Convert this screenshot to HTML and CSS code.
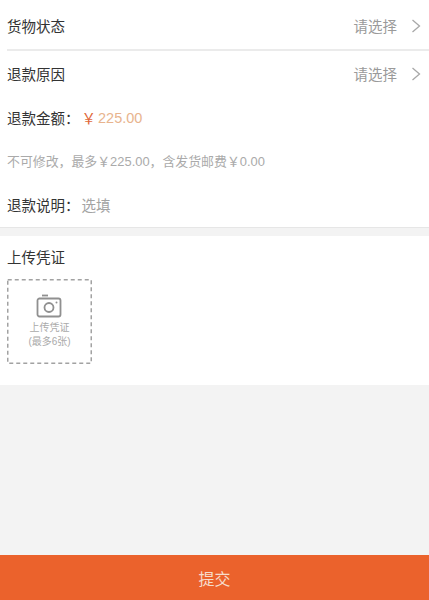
FILE: index.html
```html
<!DOCTYPE html>
<html lang="zh-CN">
<head>
    <meta charset="UTF-8">
    <meta name="viewport" content="width=device-width, initial-scale=1.0">
    <title>申请退款</title>
    <link rel="stylesheet" href="styles.css">
</head>
<body>
    <div class="page">
        <!-- Refund form -->
        <div class="form-section">
            <div class="row row-select row-first">
                <span class="label">货物状态</span>
                <span class="pick">请选择
                    <svg class="arrow" viewBox="0 0 10 14"><path d="M1.5 1 L8.5 7 L1.5 13" /></svg>
                </span>
            </div>
            <div class="row row-select row-second">
                <span class="label">退款原因</span>
                <span class="pick">请选择
                    <svg class="arrow" viewBox="0 0 10 14"><path d="M1.5 1 L8.5 7 L1.5 13" /></svg>
                </span>
            </div>
            <div class="row row-amount">
                <span class="label">退款金额：</span>
                <span class="yen">￥</span><span class="amount">225.00</span>
            </div>
            <div class="row row-note">不可修改，最多￥225.00，含发货邮费￥0.00</div>
            <div class="row row-desc">
                <span class="label">退款说明：</span>
                <span class="optional">选填</span>
            </div>
        </div>

        <!-- Upload -->
        <div class="upload-section">
            <div class="label upload-title">上传凭证</div>
            <div class="upload-box">
                <svg class="dashes" viewBox="0 0 85 85"><rect x="0.75" y="0.75" width="83.5" height="83.5" /></svg>
                <svg class="camera" viewBox="0 0 26 24">
                    <path d="M3 4.500 H22.500 a2 2 0 0 1 2 2 V20.500 a2 2 0 0 1 -2 2 H3.500 a2 2 0 0 1 -2 -2 V6.500 a2 2 0 0 1 2 -2 Z" />
                    <path d="M6 1.500 H12" />
                    <circle cx="13" cy="13.500" r="4.500" />
                    <circle class="dot" cx="20.500" cy="8.500" r="1" />
                </svg>
                <div class="upload-text">上传凭证</div>
                <div class="upload-text">(最多6张)</div>
            </div>
        </div>

        <div class="spacer"></div>

        <div class="submit">提交</div>
    </div>
</body>
</html>
```

FILE: styles.css
```css
* {
    box-sizing: border-box;
}
html, body {
    margin: 0;
    padding: 0;
    height: 100%;
}
body {
    font-family: "Liberation Sans", "Noto Sans CJK SC", sans-serif;
    background-color: #f3f3f3;
    color: #333;
}
.page {
    display: flex;
    flex-direction: column;
    height: 600px;
}
.form-section {
    background-color: #fff;
    height: 228px;
    border-bottom: 1px solid #e6e6e6;
}
.row {
    display: flex;
    align-items: center;
    padding: 0 7px;
}
.label {
    font-size: 14.5px;
    color: #333;
}
.row-first {
    height: 51px;
    margin-left: 7px;
    padding-top: 1px;
    padding-left: 0;
    border-bottom: 2px solid #ebebeb;
}
.row-second {
    height: 44px;
}
.row-select {
    justify-content: space-between;
    padding-right: 8px;
}
.pick {
    display: flex;
    align-items: center;
    font-size: 14.5px;
    color: #9a9a9a;
}
.arrow {
    width: 10px;
    height: 14px;
    margin-top: 2px;
    margin-left: 14px;
    fill: none;
    stroke: #a8a8a8;
    stroke-width: 1.3;
}
.row-amount {
    height: 44px;
}
.yen {
    margin-left: 2px;
    font-size: 14.5px;
    color: #e0683a;
}
.amount {
    margin-left: 2px;
    margin-top: 1px;
    font-size: 14.5px;
    color: #e8b48e;
}
.row-note {
    height: 43px;
    font-size: 12.9px;
    color: #aaa;
}
.row-desc {
    height: 44px;
}
.optional {
    margin-left: 2px;
    font-size: 14.5px;
    color: #a3a3a3;
}
.upload-section {
    margin-top: 8px;
    height: 149px;
    padding: 12px 7px 0;
    background-color: #fff;
}
.upload-title {
    line-height: 20px;
}
.upload-box {
    position: relative;
    display: flex;
    flex-direction: column;
    align-items: center;
    width: 85px;
    height: 85px;
    margin-top: 11px;
    padding-top: 15px;
}
.dashes {
    position: absolute;
    top: 0;
    left: 0;
    width: 85px;
    height: 85px;
    fill: none;
    stroke: #a2a2a2;
    stroke-width: 1.5;
    stroke-dasharray: 4 3;
}
.camera {
    width: 26px;
    height: 24px;
    margin-right: 2px;
    margin-bottom: 3px;
    fill: none;
    stroke: #909090;
    stroke-width: 1.8;
}
.camera .dot {
    fill: #909090;
    stroke: none;
}
.upload-text {
    font-size: 10px;
    line-height: 14px;
    color: #aaa;
}
.spacer {
    flex: 1;
}
.submit {
    height: 45px;
    line-height: 50px;
    text-align: center;
    font-size: 16px;
    color: #f6dccb;
    background-color: #eb622c;
}
```
